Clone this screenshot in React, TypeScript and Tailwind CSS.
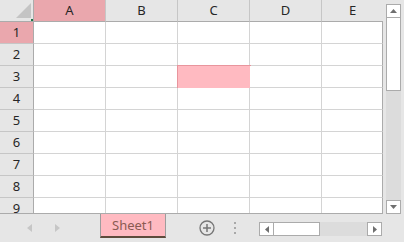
import React from "react";

const cols = ["A", "B", "C", "D", "E"];
const colW = ["w-[72px]", "w-[72px]", "w-[72px]", "w-[72px]", "w-[61px]"];
const rows = [1, 2, 3, 4, 5, 6, 7, 8, 9];

export default function App() {
  return (
    <div
      className="w-[404px] h-[242px] bg-[#e6e6e6] flex flex-col overflow-hidden"
      style={{ fontFamily: '"Noto Sans", "Open Sans", sans-serif' }}
    >
      <div className="flex h-[214px] shrink-0">
        {/* grid */}
        <div className="w-[383px] h-[214px] flex flex-col overflow-hidden shrink-0">
          {/* header */}
          <div className="flex h-[22px] shrink-0">
            <div className="w-[34px] h-[22px] border-r border-b border-[#ababab] bg-[#e6e6e6] shrink-0 relative">
              <svg width="33" height="21" className="block">
                <polygon points="16,18 31,18 31,3" fill="#c4c4c4" />
                <rect x="31" y="19" width="2" height="2" fill="#217346" />
              </svg>
            </div>
            {cols.map((c, i) => (
              <div
                key={c}
                className={`${colW[i]} h-[22px] shrink-0 border-b border-[#ababab] ${
                  i < 4 ? "border-r border-r-[#c6c6c6]" : ""
                } ${i === 0 ? "bg-[#eaa7ad]" : "bg-[#e6e6e6]"} flex items-center justify-center text-[13px] text-[#262626]`}
              >
                {c}
              </div>
            ))}
          </div>
          {/* body */}
          <div className="flex flex-col flex-1 overflow-hidden border-b border-[#ababab]">
            {rows.map((r) => (
              <div key={r} className="flex h-[22px] shrink-0">
                <div
                  className={`w-[34px] h-[22px] shrink-0 border-r border-r-[#ababab] border-b border-b-[#c6c6c6] ${
                    r === 1 ? "bg-[#eaa7ad]" : "bg-[#e6e6e6]"
                  } flex items-center justify-center text-[13px] text-[#262626]`}
                >
                  {r}
                </div>
                {cols.map((c, i) => (
                  <div
                    key={c}
                    className={`${colW[i]} h-[22px] shrink-0 border-b border-[#d4d4d4] ${
                      i < 4 ? "border-r" : "border-r border-r-[#ababab]"
                    } bg-white relative`}
                  >
                    {r === 3 && c === "C" && (
                      <div className="absolute left-[-1px] top-[-1px] w-[74px] h-[24px] bg-[#ffbac1] border border-[#e8959d]" />
                    )}
                  </div>
                ))}
              </div>
            ))}
          </div>
        </div>
        {/* vertical scrollbar */}
        <div className="ml-[3px] mt-[4px] w-[15px] h-[210px] flex flex-col shrink-0">
          <div className="h-[14px] bg-white border border-[#ababab] flex items-center justify-center shrink-0">
            <svg width="7" height="4">
              <polygon points="0,4 7,4 3.5,0" fill="#6f6f6f" />
            </svg>
          </div>
          <div className="h-[73px] bg-white border border-t-0 border-[#ababab] shrink-0" />
          <div className="flex-1 bg-[#dcdcdc]" />
          <div className="h-[14px] bg-white border border-[#ababab] flex items-center justify-center shrink-0">
            <svg width="7" height="4">
              <polygon points="0,0 7,0 3.5,4" fill="#6f6f6f" />
            </svg>
          </div>
        </div>
      </div>
      {/* bottom bar */}
      <div className="flex h-[28px] shrink-0">
        <div className="w-[100px] flex items-center shrink-0">
          <svg width="5" height="8" className="ml-[27px]">
            <polygon points="5,0 5,8 0,4" fill="#c6c6c6" />
          </svg>
          <svg width="5" height="8" className="ml-[23px]">
            <polygon points="0,0 0,8 5,4" fill="#c6c6c6" />
          </svg>
        </div>
        <div className="w-[66px] h-[24px] bg-[#ffbac1] border-l border-r border-[#9d9d9d] border-b-2 border-b-[#5e4b3c] flex items-center justify-center text-[13px] text-[#8a5a52] shrink-0 pt-[1px]">
          Sheet1
        </div>
        <div className="flex items-center w-[93px] shrink-0">
          <svg width="16" height="16" viewBox="0 0 16 16" className="ml-[33px]">
            <circle cx="8" cy="8" r="7" fill="none" stroke="#767676" strokeWidth="1.3" />
            <line x1="8" y1="4" x2="8" y2="12" stroke="#767676" strokeWidth="1.5" />
            <line x1="4" y1="8" x2="12" y2="8" stroke="#767676" strokeWidth="1.5" />
          </svg>
          <svg width="3" height="12" className="ml-[19px]">
            <rect x="0" y="0" width="2" height="2" fill="#a8a8a8" />
            <rect x="0" y="5" width="2" height="2" fill="#a8a8a8" />
            <rect x="0" y="10" width="2" height="2" fill="#a8a8a8" />
          </svg>
        </div>
        <div className="flex mt-[8px] h-[14px] w-[123px] shrink-0">
          <div className="w-[15px] h-[14px] bg-white border border-[#ababab] flex items-center justify-center shrink-0">
            <svg width="4" height="7">
              <polygon points="4,0 4,7 0,3.5" fill="#6f6f6f" />
            </svg>
          </div>
          <div className="w-[46px] h-[14px] bg-white border border-l-0 border-[#ababab] shrink-0" />
          <div className="flex-1 bg-[#dcdcdc]" />
          <div className="w-[15px] h-[14px] bg-white border border-[#ababab] flex items-center justify-center shrink-0">
            <svg width="4" height="7">
              <polygon points="0,0 0,7 4,3.5" fill="#6f6f6f" />
            </svg>
          </div>
        </div>
      </div>
    </div>
  );
}
